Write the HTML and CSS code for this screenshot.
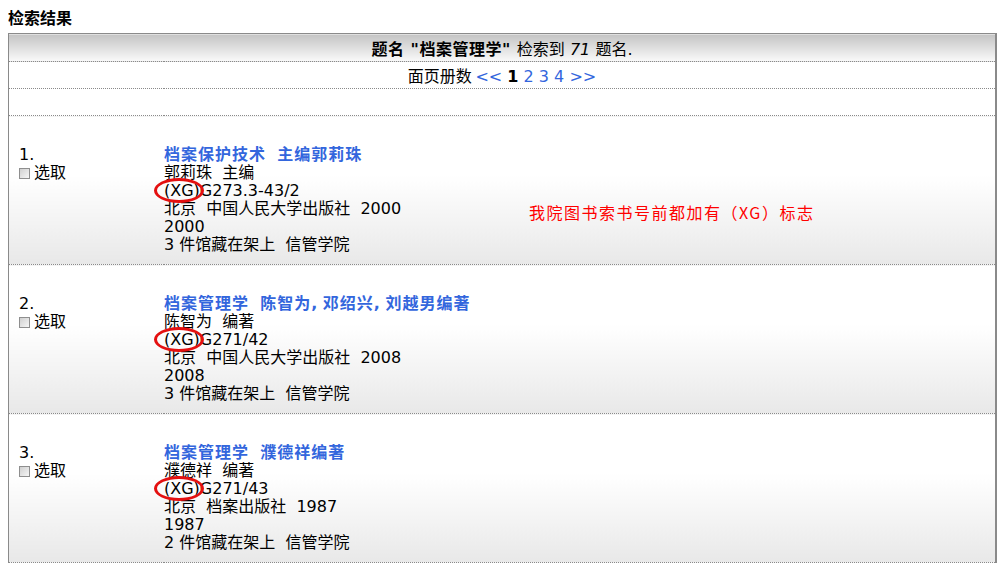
FILE: index.html
```html
<!DOCTYPE html>
<html>
	<head>
		<meta charset="utf-8">
		<title>检索结果</title>
		<link rel="stylesheet" href="styles.css">
	</head>
	<body>
		<div class="heading line">检索结果</div>
		<div class="results">
			<table class="result-table">
				<tr class="head-row">
					<td colspan="2"><div class="line"><b>题名<span class="en"> &quot;</span>档案管理学<span class="en">&quot; </span></b>检索到<span class="en"> <i>71</i> </span>题名<span class="en">.</span></div></td>
				</tr>
				<tr class="plain-row">
					<td colspan="2"><div class="line">面页册数 <span class="en"><a href="#">&lt;&lt;</a> <b>1</b> <a href="#">2</a> <a href="#">3</a> <a href="#">4</a> <a href="#">&gt;&gt;</a></span></div></td>
				</tr>
				<tr class="plain-row">
					<td colspan="2"><div class="line">&nbsp;</div></td>
				</tr>
				<tr class="item">
					<td class="num">
						<div class="line"><span class="en">1.</span></div>
						<div class="line"><label><input type="checkbox" class="pick">选取</label></div>
					</td>
					<td class="info">
						<div class="line"><a class="title" href="#">档案保护技术<span class="en">&nbsp; </span>主编郭莉珠</a></div>
						<div class="line">郭莉珠<span class="en">&nbsp; </span>主编</div>
						<div class="line"><span class="en"><span class="mark">(XG)</span>G273.3-43/2</span></div>
						<div class="line">北京<span class="en">&nbsp; </span>中国人民大学出版社<span class="en">&nbsp; 2000</span></div>
						<div class="line"><span class="en">2000</span></div>
						<div class="line"><span class="en">3 </span>件馆藏在架上<span class="en">&nbsp; </span>信管学院</div>
					</td>
				</tr>
				<tr class="item">
					<td class="num">
						<div class="line"><span class="en">2.</span></div>
						<div class="line"><label><input type="checkbox" class="pick">选取</label></div>
					</td>
					<td class="info">
						<div class="line"><a class="title" href="#">档案管理学<span class="en">&nbsp; </span>陈智为<span class="en">, </span>邓绍兴<span class="en">, </span>刘越男编著</a></div>
						<div class="line">陈智为<span class="en">&nbsp; </span>编著</div>
						<div class="line"><span class="en"><span class="mark">(XG)</span>G271/42</span></div>
						<div class="line">北京<span class="en">&nbsp; </span>中国人民大学出版社<span class="en">&nbsp; 2008</span></div>
						<div class="line"><span class="en">2008</span></div>
						<div class="line"><span class="en">3 </span>件馆藏在架上<span class="en">&nbsp; </span>信管学院</div>
					</td>
				</tr>
				<tr class="item">
					<td class="num">
						<div class="line"><span class="en">3.</span></div>
						<div class="line"><label><input type="checkbox" class="pick">选取</label></div>
					</td>
					<td class="info">
						<div class="line"><a class="title" href="#">档案管理学<span class="en">&nbsp; </span>濮德祥编著</a></div>
						<div class="line">濮德祥<span class="en">&nbsp; </span>编著</div>
						<div class="line"><span class="en"><span class="mark">(XG)</span>G271/43</span></div>
						<div class="line">北京<span class="en">&nbsp; </span>档案出版社<span class="en">&nbsp; 1987</span></div>
						<div class="line"><span class="en">1987</span></div>
						<div class="line"><span class="en">2 </span>件馆藏在架上<span class="en">&nbsp; </span>信管学院</div>
					</td>
				</tr>
			</table>
			<div class="note">我院图书索书号前都加有（XG）标志</div>
		</div>
	</body>
</html>
```

FILE: styles.css
```css
body
{
	margin: 8px;
	background-color: #ffffff;
	color: #000000;
	font-family: "Noto Sans CJK SC", sans-serif;
	font-size: 16px;
	line-height: 18px;
}

/* latin runs in a verdana-like face; line-height 0 keeps the line box at 18px */
.en
{
	font-family: "DejaVu Sans", sans-serif;
	line-height: 0;
}

.line
{
	height: 18px;
	white-space: nowrap;
}

.heading
{
	font-weight: bold;
	margin-bottom: 7px;
}

.results
{
	position: relative;
	width: 989px;
}

.result-table
{
	width: 100%;
	border-collapse: collapse;
	border-top: 1px solid #8a8a8a;
	border-left: 1px solid #8a8a8a;
	border-right: 2px solid #8a8a8a;
}

.result-table td
{
	border-bottom: 1px dotted #8a8a8a;
	padding: 0;
}

.head-row td
{
	text-align: center;
	padding: 5px 0 4px;
	background: linear-gradient(#c4c4c4, #fafafa);
}

.head-row b
{
	letter-spacing: 0.5px;
}

.plain-row td
{
	text-align: center;
	padding: 4px 0 4px;
}

a
{
	color: #3366dd;
	text-decoration: none;
}

.item td
{
	vertical-align: top;
	padding-top: 28px;
	padding-bottom: 12px;
	background: linear-gradient(#ffffff 40%, #e8e8e8);
}

.item td.num
{
	width: 145px;
	padding-left: 10px;
}

.title
{
	font-weight: bold;
	letter-spacing: 1px;
}

.title .en
{
	letter-spacing: 0;
}

.pick
{
	appearance: none;
	-webkit-appearance: none;
	width: 11px;
	height: 11px;
	margin: 0 4px 0 0;
	border: 1px solid #8e8e8e;
	background: linear-gradient(135deg, #d0d0d0, #f6f6f6);
	vertical-align: -1px;
}

.mark
{
	position: relative;
	display: inline-block;
	line-height: 18px;
}

.mark::after
{
	content: "";
	position: absolute;
	left: -10px;
	right: -4px;
	top: -4px;
	bottom: -3px;
	border: 3px solid #e41010;
	border-radius: 50%;
}

.note
{
	position: absolute;
	left: 521px;
	top: 170px;
	color: #ff0000;
	letter-spacing: 1.5px;
}
```
